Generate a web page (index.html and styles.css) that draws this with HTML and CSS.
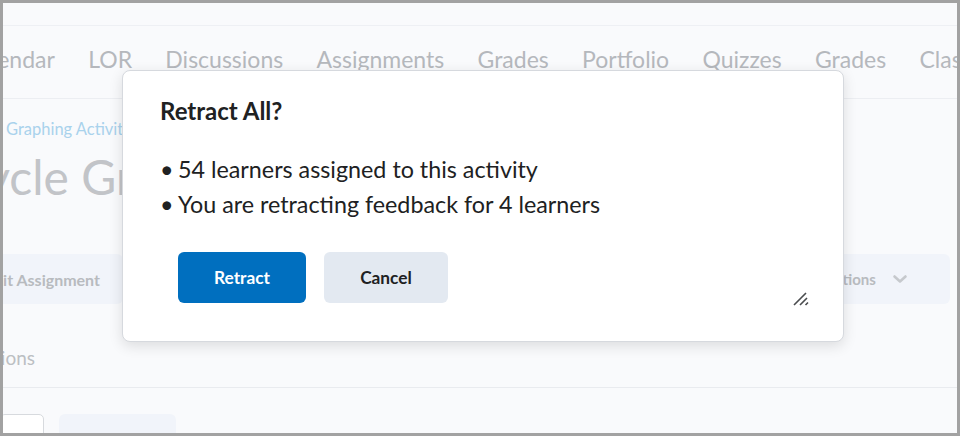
FILE: index.html
```html
<!DOCTYPE html>
<html lang="en">
<head>
<meta charset="utf-8">
<title>Retract All?</title>
<link rel="stylesheet" href="styles.css">
</head>
<body>
<div class="frame">
  <div class="page">
    <div class="topstrip"></div>
    <nav class="nav">
      <span>Calendar</span>
      <span>LOR</span>
      <span>Discussions</span>
      <span>Assignments</span>
      <span>Grades</span>
      <span>Portfolio</span>
      <span>Quizzes</span>
      <span>Grades</span>
      <span>Classlist</span>
    </nav>
    <div class="header">
      <div class="crumb">Graphing Activities</div>
      <h1 class="title">Cycle Graphing</h1>
    </div>
    <div class="toolbar">
      <div class="tbtn tbtn-left">Edit Assignment</div>
      <div class="tbtn tbtn-right">More Actions
        <svg class="chev" width="16" height="16" viewBox="0 0 16 16"><path d="M2.5 5.5 L8 10.5 L13.5 5.5" fill="none" stroke="#c6c9cd" stroke-width="2.6" stroke-linecap="round" stroke-linejoin="round"/></svg>
      </div>
    </div>
    <div class="tabs"><span class="tab">Submissions</span></div>
    <div class="filters">
      <div class="input"></div>
      <div class="fbtn"></div>
    </div>
  </div>

  <div class="dialog" role="dialog">
    <h2 class="d-title">Retract All?</h2>
    <ul class="d-list">
      <li>54 learners assigned to this activity</li>
      <li>You are retracting feedback for 4 learners</li>
    </ul>
    <div class="d-actions">
      <button class="btn btn-primary">Retract</button>
      <button class="btn btn-secondary">Cancel</button>
    </div>
    <svg class="resize" width="16" height="16" viewBox="0 0 16 16"><path d="M1 15 L13 3 M7 15 L14 8 M12.5 15 L15 12.5" fill="none" stroke="#4a4c4f" stroke-width="1.6"/></svg>
  </div>
</div>
</body>
</html>
```

FILE: styles.css
```css
* { box-sizing: border-box; }
html, body { margin: 0; padding: 0; }
body {
  font-family: Lato, "Noto Sans", sans-serif;
  width: 960px;
  height: 436px;
  overflow: hidden;
}
.frame {
  position: relative;
  width: 960px;
  height: 436px;
  border: 3px solid #a2a2a2;
  background: #f9fafc;
  overflow: hidden;
}
.page {
  width: 100%;
  height: 100%;
  display: flex;
  flex-direction: column;
  overflow: hidden;
}
.topstrip {
  height: 23px;
  flex: none;
  border-bottom: 1px solid #eef0f4;
}
.nav {
  height: 73px;
  flex: none;
  display: flex;
  align-items: center;
  gap: 33.3px;
  margin-left: -38px;
  padding-bottom: 6px;
  border-bottom: 1px solid #eceef2;
  font-size: 23px;
  color: #b5b8bd;
  white-space: nowrap;
}
.header {
  flex: none;
  padding-top: 20px;
}
.crumb {
  font-size: 16.5px;
  color: #a9d2ec;
  margin-left: 3px;
  line-height: 20px;
}
.title {
  margin: 10px 0 0 -49px;
  font-weight: 400;
  font-size: 48px;
  line-height: 56px;
  color: #c2c4c8;
  white-space: nowrap;
}
.toolbar {
  flex: none;
  display: flex;
  justify-content: space-between;
  margin-top: 49px;
  padding-right: 7px;
  height: 50px;
}
.tbtn {
  display: flex;
  align-items: center;
  background: #f1f4fa;
  border-radius: 6px;
  font-size: 16px;
  font-weight: 700;
  color: #b8bbbf;
  white-space: nowrap;
}
.tbtn-left {
  width: 200px;
  margin-left: -80px;
  justify-content: flex-end;
  padding-right: 23px;
}
.tbtn-right {
  width: 200px;
  padding-left: 36px;
  gap: 16px;
  font-size: 15px;
}
.chev { flex: none; }
.tabs {
  flex: none;
  height: 84px;
  display: flex;
  align-items: flex-end;
  padding-bottom: 17px;
  border-bottom: 1px solid #e9ebef;
}
.tab {
  display: block;
  width: 120px;
  text-align: right;
  font-size: 19px;
  line-height: 24px;
  color: #bcbfc3;
  margin-left: -88px;
}
.filters {
  flex: none;
  display: flex;
  gap: 15px;
  margin-top: 26px;
}
.input {
  width: 44px;
  height: 32px;
  margin-left: -3px;
  background: #ffffff;
  border: 1px solid #d7dade;
  border-radius: 5px;
}
.fbtn {
  width: 117px;
  height: 32px;
  background: #f1f4fa;
  border-radius: 6px;
}

/* Dialog */
.dialog {
  position: absolute;
  left: 119px;
  top: 67px;
  width: 722px;
  height: 272px;
  background: #ffffff;
  border: 1px solid #d6d9de;
  border-radius: 8px;
  box-shadow: 0 4px 14px rgba(0, 0, 0, 0.12);
  padding: 25px 36px 0 37px;
  color: #202122;
}
.d-title {
  margin: 0;
  font-size: 24px;
  font-weight: 700;
  line-height: 30px;
}
.d-list {
  margin: 26px 0 0 0;
  padding: 0;
  list-style: none;
  font-size: 23.3px;
  line-height: 35px;
}
.d-list li::before {
  content: "\2022";
  display: inline-block;
  width: 18px;
}
.d-actions {
  display: flex;
  gap: 18px;
  margin: 30px 0 0 18px;
}
.btn {
  height: 51px;
  border: none;
  border-radius: 6px;
  font-family: Lato, "Noto Sans", sans-serif;
  font-size: 17.3px;
  font-weight: 700;
  padding: 0;
}
.btn-primary {
  width: 128px;
  background: #006fbf;
  color: #ffffff;
}
.btn-secondary {
  width: 124px;
  background: #e3e9f1;
  color: #202122;
}
.resize {
  position: absolute;
  right: 34px;
  bottom: 35px;
}
```
